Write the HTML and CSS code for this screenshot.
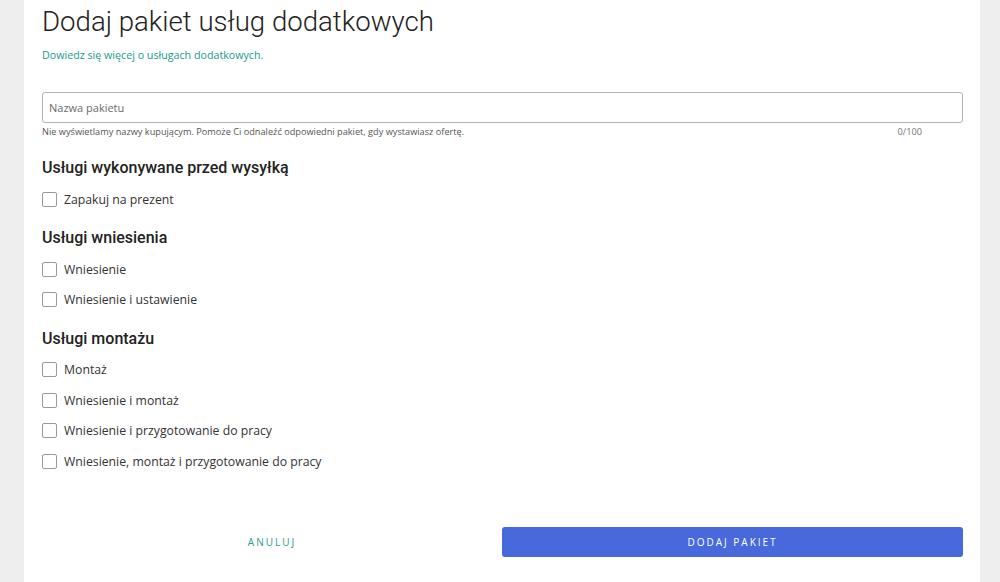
FILE: index.html
```html
<!DOCTYPE html>
<html lang="pl">
<head>
<meta charset="utf-8">
<title>Dodaj pakiet usług dodatkowych</title>
<link rel="stylesheet" href="styles.css">
</head>
<body>
<div class="panel">
  <h1 class="title">Dodaj pakiet usług dodatkowych</h1>
  <a class="learn" href="#">Dowiedz się więcej o usługach dodatkowych.</a>

  <div class="field">
    <input class="name-input" type="text" placeholder="Nazwa pakietu">
    <div class="helper">
      <span>Nie wyświetlamy nazwy kupującym. Pomoże Ci odnaleźć odpowiedni pakiet, gdy wystawiasz ofertę.</span>
      <span class="counter">0/100</span>
    </div>
  </div>

  <section class="group">
    <h2 class="group-title">Usługi wykonywane przed wysyłką</h2>
    <label class="row"><span class="box"></span><span>Zapakuj na prezent</span></label>
  </section>

  <section class="group">
    <h2 class="group-title">Usługi wniesienia</h2>
    <label class="row"><span class="box"></span><span>Wniesienie</span></label>
    <label class="row"><span class="box"></span><span>Wniesienie i ustawienie</span></label>
  </section>

  <section class="group">
    <h2 class="group-title">Usługi montażu</h2>
    <label class="row"><span class="box"></span><span>Montaż</span></label>
    <label class="row"><span class="box"></span><span>Wniesienie i montaż</span></label>
    <label class="row"><span class="box"></span><span>Wniesienie i przygotowanie do pracy</span></label>
    <label class="row"><span class="box"></span><span>Wniesienie, montaż i przygotowanie do pracy</span></label>
  </section>

  <div class="actions">
    <button class="btn btn-cancel" type="button">Anuluj</button>
    <button class="btn btn-primary" type="button">Dodaj pakiet</button>
  </div>
</div>
</body>
</html>
```

FILE: styles.css
```css
* { box-sizing: border-box; }

html, body {
  margin: 0;
  height: 100%;
}

body {
  background: #eeeeee;
  font-family: "Open Sans", "Liberation Sans", sans-serif;
  color: #222222;
}

.panel {
  margin-left: 24px;
  width: 956px;
  min-height: 582px;
  background: #ffffff;
  padding: 4px 17px 0 18px;
}

.title {
  margin: 0;
  font-family: Roboto, "Liberation Sans", sans-serif;
  font-weight: 300;
  font-size: 27.6px;
  line-height: 36px;
  color: #222222;
}

.learn {
  display: block;
  margin-top: 7px;
  font-size: 10.7px;
  line-height: 16px;
  color: #1a9a8c;
  text-decoration: none;
}

.field {
  margin-top: 29px;
}

.name-input {
  display: block;
  width: 100%;
  height: 31px;
  border: 1px solid #b5b5b5;
  border-radius: 3px;
  padding: 0 6px;
  font-family: "Open Sans", "Liberation Sans", sans-serif;
  font-size: 11px;
  color: #222222;
  background: #ffffff;
  outline: none;
}

.name-input::placeholder {
  color: #6b6b6b;
}

.helper {
  display: flex;
  justify-content: space-between;
  padding-right: 41px;
  margin-top: 2px;
  font-size: 9.2px;
  line-height: 14px;
  color: #555555;
}

.counter {
  color: #767676;
}

.group {
  margin-top: 19px;
}

.group + .group {
  margin-top: 13.5px;
}

.group-title {
  margin: 0 0 6px;
  font-family: Roboto, "Liberation Sans", sans-serif;
  font-weight: 500;
  font-size: 16px;
  line-height: 20px;
  color: #222222;
}

.row {
  display: flex;
  align-items: center;
  gap: 7px;
  height: 30.5px;
  font-size: 12.25px;
  color: #333333;
}

.box {
  width: 15px;
  height: 15px;
  border: 1px solid #9a9a9a;
  border-radius: 2px;
  background: #ffffff;
  flex: none;
}

.actions {
  display: grid;
  grid-template-columns: 460px 1fr;
  margin-top: 50.5px;
}

.btn {
  height: 30px;
  border: none;
  border-radius: 3px;
  font-family: "Open Sans", "Liberation Sans", sans-serif;
  font-size: 10px;
  letter-spacing: 2px;
  text-transform: uppercase;
  cursor: pointer;
}

.btn-cancel {
  background: transparent;
  color: #1f9d8f;
}

.btn-primary {
  background: #4869dc;
  color: #ffffff;
}
```
